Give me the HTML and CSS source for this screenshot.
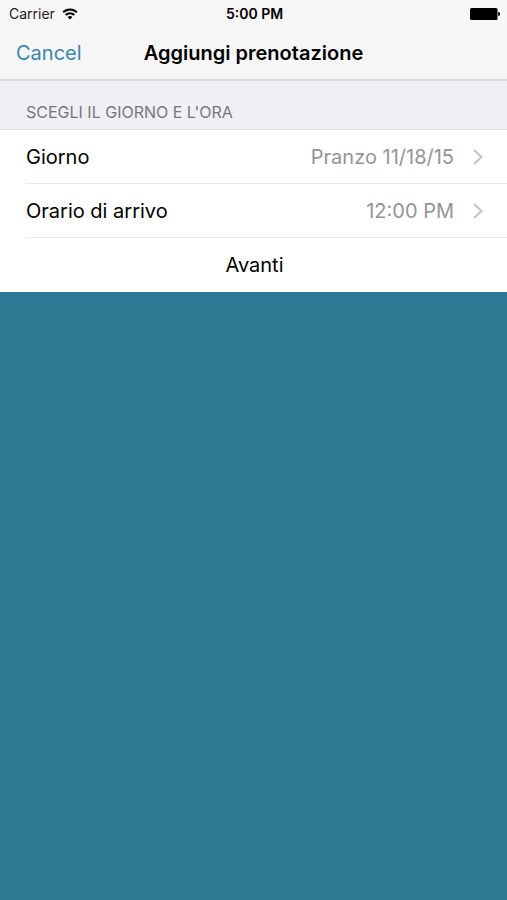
FILE: index.html
```
<!DOCTYPE html>
<html lang="it">
<head>
    <meta charset="UTF-8">
    <meta name="viewport" content="width=device-width, initial-scale=1.0">
    <title>Aggiungi prenotazione</title>
    <link rel="stylesheet" href="styles.css">
</head>
<body>
    <header class="top">
      <div class="status">
        <div class="carrier">
          <span>Carrier</span>
          <svg class="wifi" viewBox="0 0 16 12" aria-hidden="true">
            <path d="M1.200 4.300a9.600 9.600 0 0 1 13.600 0" />
            <path d="M3.700 7a6 6 0 0 1 8.600 0" />
            <path class="dot" d="M8 11.500L5.600 9.100a3.400 3.400 0 0 1 4.800 0z" />
          </svg>
        </div>
        <span class="clock">5:00 PM</span>
        <svg class="battery" viewBox="0 0 30 12" aria-hidden="true">
          <rect x="0" y="0" width="27.500" height="12" rx="1.500" />
          <path d="M28.200 4a2 2 0 0 1 0 4z" />
        </svg>
      </div>
      <nav class="navbar">
        <button class="cancel" type="button">Cancel</button>
        <h1>Aggiungi prenotazione</h1>
      </nav>
    </header>

    <main>
      <h2 class="section-title">SCEGLI IL GIORNO E L'ORA</h2>
      <div class="list">
        <button class="row" type="button">
          <span class="label">Giorno</span>
          <span class="value">Pranzo 11/18/15</span>
          <svg class="chevron" viewBox="0 0 10 16" aria-hidden="true"><path d="M1 1l7.500 7L1 15" /></svg>
        </button>
        <button class="row" type="button">
          <span class="label">Orario di arrivo</span>
          <span class="value">12:00 PM</span>
          <svg class="chevron" viewBox="0 0 10 16" aria-hidden="true"><path d="M1 1l7.500 7L1 15" /></svg>
        </button>
        <button class="row next" type="button">Avanti</button>
      </div>
    </main>
</body>
</html>
```

FILE: styles.css
```
* {
  margin: 0;
  padding: 0;
  box-sizing: border-box;
}
body {
  min-height: 100vh;
  background-color: #2e7894;
  color: #000;
  font-family: Inter, "Liberation Sans", sans-serif;
  font-size: 20px;
}
button {
  border: none;
  background: none;
  color: inherit;
  font: inherit;
  cursor: pointer;
}

.top {
  background-color: #f6f6f7;
  border-bottom: 2px solid #dcdcdf;
}
.status {
  display: grid;
  grid-template-columns: 1fr auto 1fr;
  align-items: center;
  height: 27px;
  padding: 0 7px 0 9px;
  font-size: 14px;
}
.carrier {
  display: flex;
  align-items: center;
  gap: 7px;
  color: #222;
}
.wifi {
  width: 16px;
  height: 12px;
  fill: none;
  stroke: #000;
  stroke-width: 2;
}
.wifi .dot {
  fill: #000;
  stroke: none;
}
.clock {
  font-weight: 600;
}
.battery {
  justify-self: end;
  width: 30px;
  height: 12px;
}

.navbar {
  display: grid;
  grid-template-columns: 1fr auto 1fr;
  align-items: center;
  height: 52px;
  padding: 0 16px;
}
.navbar h1 {
  font-size: 20px;
  font-weight: 600;
}
.cancel {
  justify-self: start;
  color: #3a86a6;
}

.section-title {
  padding: 20px 26px 6px;
  background-color: #efeff4;
  border-bottom: 1px solid #e0e0e3;
  color: #77777b;
  font-size: 16px;
  font-weight: 400;
  line-height: 22px;
}
.list {
  background-color: #fff;
}
.row {
  display: flex;
  align-items: center;
  width: 100%;
  height: 54px;
  padding: 0 24px 0 26px;
  background: linear-gradient(#e8e8ea, #e8e8ea) 26px 100% / 100% 1px no-repeat;
}
.label {
  flex: 1;
  text-align: left;
}
.value {
  color: #949496;
}
.chevron {
  width: 10px;
  height: 16px;
  margin-left: 19px;
  fill: none;
  stroke: #c3c3c6;
  stroke-width: 2;
}
.next {
  justify-content: center;
  background: none;
}
```
